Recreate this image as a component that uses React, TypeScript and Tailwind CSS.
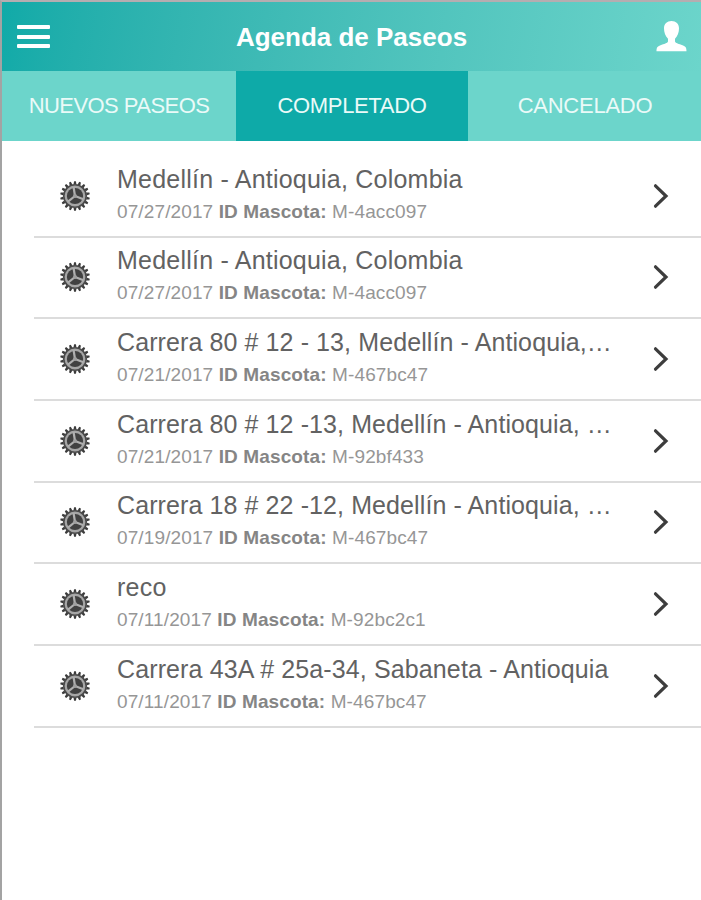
const rows = [
  { place: 'Medellín - Antioquia, Colombia', date: '07/27/2017', pet: 'M-4acc097', fit: 'tracking-[0.22px]' },
  { place: 'Medellín - Antioquia, Colombia', date: '07/27/2017', pet: 'M-4acc097', fit: 'tracking-[0.22px]' },
  { place: 'Carrera 80 # 12 - 13, Medellín - Antioquia,…', date: '07/21/2017', pet: 'M-467bc47', fit: 'tracking-[0.1px]' },
  { place: 'Carrera 80 # 12 -13, Medellín - Antioquia, …', date: '07/21/2017', pet: 'M-92bf433', fit: 'tracking-[0.1px]' },
  { place: 'Carrera 18 # 22 -12, Medellín - Antioquia, …', date: '07/19/2017', pet: 'M-467bc47', fit: 'tracking-[0.1px]' },
  { place: 'reco', date: '07/11/2017', pet: 'M-92bc2c1', fit: 'tracking-[0.22px]' },
  { place: 'Carrera 43A # 25a-34, Sabaneta - Antioquia', date: '07/11/2017', pet: 'M-467bc47', fit: 'tracking-[0.12px]' },
];

const teeth = Array.from({ length: 18 }, (_, i) => i * 20);

function Gear() {
  return (
    <svg className="h-[30px] w-[30px] shrink-0" viewBox="-15 -15 30 30">
      {teeth.map((a) => (
        <path key={a} d="M-1.5 -11.500 L-0.900 -14.800 H0.900 L1.500 -11.500 Z" fill="#3c3c3c" transform={`rotate(${a})`} />
      ))}
      <circle r="11.200" fill="#a6a6a6" stroke="#4a4a4a" strokeWidth="1.600" />
      <circle r="8.100" fill="#414141" />
      <g stroke="#b0b0b0" strokeWidth="2.200" transform="rotate(-9)">
        <path d="M0 0V-9" />
        <path d="M0 0V-9" transform="rotate(120)" />
        <path d="M0 0V-9" transform="rotate(240)" />
      </g>
      <circle r="2" fill="#a0a0a0" />
    </svg>
  );
}

export default function App() {
  return (
    <div className="flex h-[900px] w-[701px] flex-col overflow-hidden border-l-2 border-t-2 border-l-[#a3a3a3] border-t-[#b5adb0] bg-white font-['Liberation_Sans',Arial,sans-serif]">
      <header className="flex h-[69px] shrink-0 items-center justify-between bg-linear-100 from-[#10aaa8] to-[#6cd5cb] pl-[15px] pr-[14px] text-white">
        <button className="flex w-[33px] flex-col gap-[5.4px]" aria-label="Menú">
          <span className="h-1 w-full rounded-[1px] bg-white" />
          <span className="h-1 w-full rounded-[1px] bg-white" />
          <span className="h-1 w-full rounded-[1px] bg-white" />
        </button>
        <h1 className="mr-[3px] text-[26px] font-bold leading-none">Agenda de Paseos</h1>
        <svg className="h-[31px] w-[31px]" viewBox="0 0 31 31" fill="white">
          <path d="M15.500 0C11 0 8 3 8 7.200C8 11.500 9.300 15 12 17.800V20.500C11.500 22.300 8 22.900 4.500 24.200C1.300 25.400 0.500 26.500 0.500 30.300H30.500C30.500 26.500 29.700 25.400 26.500 24.200C23 22.900 19.500 22.300 19 20.500V17.800C21.700 15 23 11.500 23 7.200C23 3 20 0 15.500 0Z" />
        </svg>
      </header>
      <nav className="grid h-[70px] shrink-0 grid-cols-[234px_232px_233px] bg-[#6cd5cb] pb-0 text-[22px] text-[#eafaf8]">
        <button className="pb-[2px] tracking-[-0.55px]">NUEVOS PASEOS</button>
        <button className="bg-[#0eaaa8] pb-[2px] tracking-[-0.35px]">COMPLETADO</button>
        <button className="pb-[2px] pl-px tracking-[-0.25px]">CANCELADO</button>
      </nav>
      <ul className="mt-[15px] flex flex-col pl-8">
        {rows.map((r, i) => (
          <li key={i} className="flex h-[81.670px] items-center border-b-2 border-[#dcdcdc] pl-[25.500px] pr-[32px]">
            <Gear />
            <div className="ml-[27.500px] min-w-0 flex-1 pb-[3px]">
              <p className={`whitespace-nowrap text-[25px] leading-[35px] text-[#626262] ${r.fit}`}>{r.place}</p>
              <p className="whitespace-nowrap text-[19px] leading-[30px] tracking-[0.12px] text-[#969696]">
                {r.date} <b className="text-[#858585]">ID Mascota:</b> {r.pet}
              </p>
            </div>
            <svg className="h-[26px] w-4 shrink-0" viewBox="0 0 16 26" fill="none" stroke="#3d3d3d" strokeWidth="3.200" strokeLinecap="round">
              <path d="M2.500 2.800L13 13L2.500 23.200" />
            </svg>
          </li>
        ))}
      </ul>
    </div>
  );
}
